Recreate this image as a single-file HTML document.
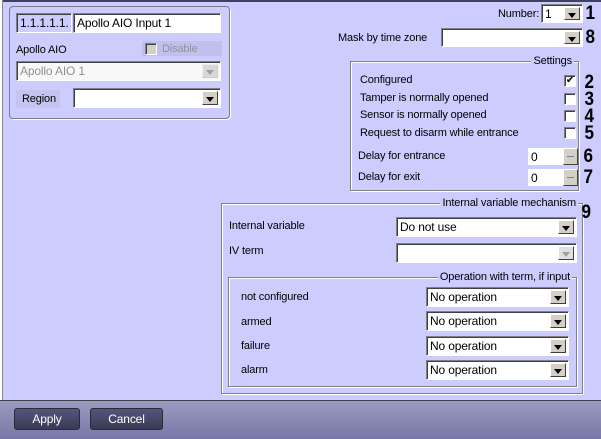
<!DOCTYPE html>
<html><head><style>
*{box-sizing:border-box;margin:0;padding:0}
body{width:601px;height:439px;overflow:hidden;background:#ccccff;font-family:"Liberation Sans",sans-serif;font-size:11px;letter-spacing:-0.15px;color:#000;position:relative}
.a{position:absolute}
.t{position:absolute;white-space:nowrap;line-height:13px}
.inp{position:absolute;background:#fff;border:1px solid;border-color:#808080 #fff #fff #808080;box-shadow:inset 1px 1px 0 #404040;padding:3px 3px 0;line-height:13px;white-space:nowrap;overflow:hidden;font-size:12px}
.btn{position:absolute;top:2px;right:2px;bottom:2px;width:16px;background:#d4d0c8;border:1px solid;border-color:#fff #404040 #404040 #fff}
.btn:after{content:"";position:absolute;left:3px;top:5px;border-left:4px solid transparent;border-right:4px solid transparent;border-top:5px solid #000}
.dis .btn:after{border-top-color:#a0a0a0}
.grp{position:absolute;border:1px solid #808080;box-shadow:1px 1px 0 #fff, inset 1px 1px 0 #fff}
.gt{position:absolute;background:#ccccff;padding:0 2px;top:-7px;line-height:13px;white-space:nowrap}
.cb{position:absolute;width:12px;height:12px;background:#fff;border:1px solid;border-color:#808080 #fff #fff #808080;box-shadow:inset 1px 1px 0 #404040}
.n{position:absolute;font-weight:bold;font-size:19px;line-height:19px;transform:scaleX(0.9)}
.sp{position:absolute;width:15px;height:17px;background:#d4d0c8;border:1px solid;border-color:#fff #404040 #404040 #fff}
.sp:after{content:"";position:absolute;left:3px;right:3px;top:7px;height:1px;background:#808080}
.pb{position:absolute;height:22px;top:408px;background:linear-gradient(#55557a,#3a3a55);border:1px solid #2a2a3a;border-radius:3px;color:#fff;text-align:center;line-height:20px;font-size:12px}
</style></head><body>
<div class="a" style="left:0;top:0;width:601px;height:2px;background:#404060"></div>
<div class="a" style="left:0;top:0;width:3px;height:400px;background:#fff;border-right:1px solid #888"></div>

<div class="a" style="left:9px;top:6px;width:221px;height:113px;border:1px solid #7a7a90;border-radius:4px;box-shadow:1px 1px 0 #fff"></div>
<div class="inp" style="left:16px;top:13px;width:56px;height:20px;background:#ccccff">1.1.1.1.1.</div>
<div class="inp" style="left:73px;top:13px;width:148px;height:20px">Apollo AIO Input 1</div>
<div class="t" style="left:16px;top:44px">Apollo AIO</div>
<div class="a" style="left:142px;top:41px;width:80px;height:15px;background:#c0c0ee"></div>
<div class="cb" style="left:145px;top:43px;background:#d4d0c8"></div>
<div class="t" style="left:162px;top:43px;color:#9090a0">Disable</div>
<div class="inp dis" style="left:16px;top:61px;width:205px;height:20px;color:#909090;background:#f8f8f8">Apollo AIO 1<div class="btn" style="background:#d8d8d8;border-color:#eee #ccc #ccc #eee"></div></div>
<div class="a" style="left:16px;top:90px;width:44px;height:18px;background:#c4c4f0"></div>
<div class="t" style="left:22px;top:93px">Region</div>
<div class="inp" style="left:73px;top:88px;width:148px;height:20px"><div class="btn"></div></div>

<div class="t" style="left:498px;top:8px">Number:</div>
<div class="inp" style="left:541px;top:4px;width:42px;height:19px">1<div class="btn"></div></div>
<div class="n" style="left:585px;top:4px">1</div>
<div class="t" style="left:338px;top:32px">Mask by time zone</div>
<div class="inp" style="left:441px;top:28px;width:142px;height:19px"><div class="btn"></div></div>
<div class="n" style="left:585px;top:28px">8</div>

<div class="grp" style="left:350px;top:61px;width:229px;height:130px"><div class="gt" style="right:4px">Settings</div></div>
<div class="t" style="left:360px;top:74px">Configured</div>
<div class="t" style="left:360px;top:92px">Tamper is normally opened</div>
<div class="t" style="left:360px;top:109px">Sensor is normally opened</div>
<div class="t" style="left:360px;top:127px">Request to disarm while entrance</div>
<div class="cb" style="left:564px;top:75px;font-size:10px;line-height:9px;text-align:center">✔</div>
<div class="cb" style="left:564px;top:93px"></div>
<div class="cb" style="left:564px;top:110px"></div>
<div class="cb" style="left:564px;top:127px"></div>
<div class="n" style="left:584px;top:73px">2</div>
<div class="n" style="left:584px;top:90px">3</div>
<div class="n" style="left:584px;top:107px">4</div>
<div class="n" style="left:584px;top:124px">5</div>
<div class="t" style="left:358px;top:150px">Delay for entrance</div>
<div class="t" style="left:358px;top:171px">Delay for exit</div>
<div class="a" style="left:528px;top:148px;width:36px;height:17px;background:#fff;padding:2px 3px;font-size:12px">0</div>
<div class="sp" style="left:563px;top:148px"></div>
<div class="a" style="left:528px;top:169px;width:36px;height:17px;background:#fff;padding:2px 3px;font-size:12px">0</div>
<div class="sp" style="left:563px;top:169px"></div>
<div class="n" style="left:583px;top:147px">6</div>
<div class="n" style="left:583px;top:168px">7</div>

<div class="grp" style="left:221px;top:203px;width:362px;height:191px"><div class="gt" style="right:4px">Internal variable mechanism</div></div>
<div class="n" style="left:581px;top:203px">9</div>
<div class="t" style="left:229px;top:220px">Internal variable</div>
<div class="inp" style="left:396px;top:217px;width:181px;height:20px">Do not use<div class="btn"></div></div>
<div class="t" style="left:229px;top:245px">IV term</div>
<div class="inp dis" style="left:396px;top:243px;width:181px;height:20px"><div class="btn" style="background:#e0e0e0"></div></div>

<div class="grp" style="left:228px;top:277px;width:349px;height:110px"><div class="gt" style="right:4px">Operation with term, if input</div></div>
<div class="t" style="left:241px;top:291px">not configured</div>
<div class="t" style="left:241px;top:316px">armed</div>
<div class="t" style="left:241px;top:340px">failure</div>
<div class="t" style="left:241px;top:364px">alarm</div>
<div class="inp" style="left:426px;top:287px;width:143px;height:20px">No operation<div class="btn"></div></div>
<div class="inp" style="left:426px;top:311px;width:143px;height:20px">No operation<div class="btn"></div></div>
<div class="inp" style="left:426px;top:336px;width:143px;height:20px">No operation<div class="btn"></div></div>
<div class="inp" style="left:426px;top:360px;width:143px;height:20px">No operation<div class="btn"></div></div>

<div class="a" style="left:0;top:400px;width:601px;height:39px;background:linear-gradient(#9a9ac0,#7878a8);border-top:1px solid #404050"></div>
<div class="pb" style="left:14px;width:66px">Apply</div>
<div class="pb" style="left:90px;width:73px">Cancel</div>
</body></html>
